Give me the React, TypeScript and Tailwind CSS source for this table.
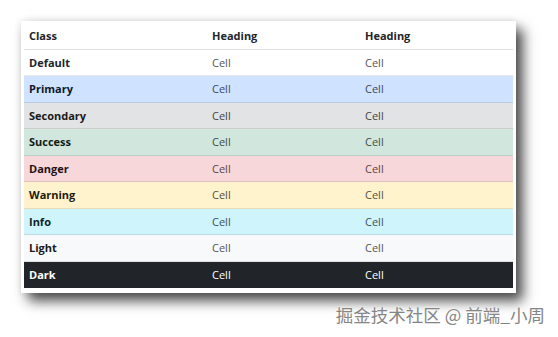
const rows = [
  { name: 'Default', bg: 'bg-white', border: 'border-[#e6e8ea]', text: 'text-[#212529]', cell: 'text-[#555]' },
  { name: 'Primary', bg: 'bg-[#cfe2ff]', border: 'border-[#bacbe6]', text: 'text-[#101828]', cell: 'text-[#3d4a5c]' },
  { name: 'Secondary', bg: 'bg-[#e2e3e5]', border: 'border-[#cbccce]', text: 'text-[#1a1a1a]', cell: 'text-[#444]' },
  { name: 'Success', bg: 'bg-[#d1e7dd]', border: 'border-[#bcd0c7]', text: 'text-[#101c16]', cell: 'text-[#3c4d45]' },
  { name: 'Danger', bg: 'bg-[#f8d7da]', border: 'border-[#dfc2c4]', text: 'text-[#1f1213]', cell: 'text-[#5a4647]' },
  { name: 'Warning', bg: 'bg-[#fff3cd]', border: 'border-[#e6dbb9]', text: 'text-[#1f1a0c]', cell: 'text-[#55503f]' },
  { name: 'Info', bg: 'bg-[#cff4fc]', border: 'border-[#badce3]', text: 'text-[#0e1f24]', cell: 'text-[#3b5258]' },
  { name: 'Light', bg: 'bg-[#f8f9fa]', border: 'border-[#dfe0e1]', text: 'text-[#1a1a1a]', cell: 'text-[#555]' },
  { name: 'Dark', bg: 'bg-[#212529]', border: 'border-[#212529]', text: 'text-white', cell: 'text-white' },
]

export default function App() {
  return (
    <div className="w-[558px] h-[337px] bg-white overflow-hidden pt-[21px] pl-[21px] font-['Open_Sans','Noto_Sans',sans-serif]">
      <div className="w-[495px] bg-white pt-[2px] px-[3px] pb-[5px] shadow-[7px_8px_12px_rgba(0,0,0,0.7),0_0_8px_rgba(0,0,0,0.1)]">
        <div className="grid grid-cols-[183px_153px_153px] text-[11px] font-bold text-[#212529] border-b border-[#dee2e6]">
          <div className="px-[5px] leading-[15.5px] py-[5px]">Class</div>
          <div className="px-[5px] leading-[15.5px] py-[5px]">Heading</div>
          <div className="px-[5px] leading-[15.5px] py-[5px]">Heading</div>
        </div>
        {rows.map((r) => (
          <div key={r.name} className={`grid grid-cols-[183px_153px_153px] text-[11px] border-b ${r.bg} ${r.border}`}>
            <div className={`px-[5px] leading-[15.5px] py-[5px] font-bold ${r.text}`}>{r.name}</div>
            <div className={`px-[5px] leading-[15.5px] py-[5px] ${r.cell}`}>Cell</div>
            <div className={`px-[5px] leading-[15.5px] py-[5px] ${r.cell}`}>Cell</div>
          </div>
        ))}
      </div>
      <div className="flex justify-end pr-[13px] mt-[11px]">
        <span className="text-[17.5px] leading-[22px] text-[#858585] font-['Noto_Sans_CJK_SC',sans-serif] [text-shadow:0_0_2px_#fff]">
          掘金技术社区 @ 前端_小周
        </span>
      </div>
    </div>
  )
}
